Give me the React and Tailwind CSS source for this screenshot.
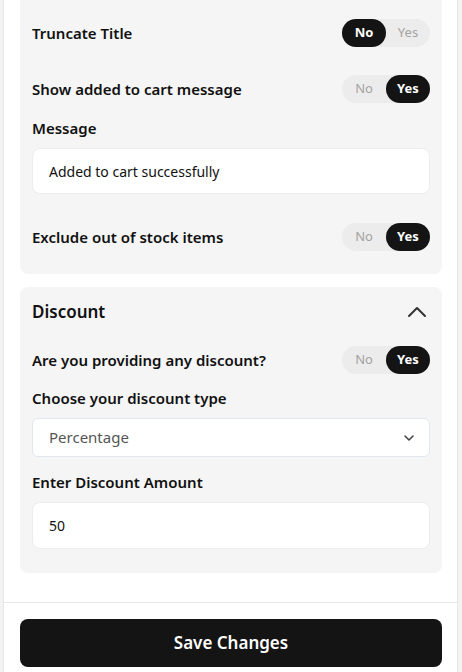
import React from "react";

function Toggle({ value }) {
  const yes = value === "yes";
  return (
    <div className="flex h-7 w-[88px] items-center rounded-full bg-[#ececec] text-[13px]">
      <div
        className={
          yes
            ? "flex h-7 w-[44px] items-center justify-center rounded-full text-[#a3a3a3]"
            : "flex h-7 w-[44px] items-center justify-center rounded-full bg-[#141414] font-bold text-white"
        }
      >
        No
      </div>
      <div
        className={
          yes
            ? "flex h-7 w-[44px] items-center justify-center rounded-full bg-[#141414] font-bold text-white"
            : "flex h-7 w-[44px] items-center justify-center rounded-full text-[#a3a3a3]"
        }
      >
        Yes
      </div>
    </div>
  );
}

function Row({ label, value, className = "" }) {
  return (
    <div className={"flex items-center justify-between " + className}>
      <span className="text-[15px] font-semibold text-[#111]">{label}</span>
      <Toggle value={value} />
    </div>
  );
}

export default function App() {
  return (
    <div
      className="min-h-[672px] bg-[#f3f3f3] pl-[3px] pr-[4px]"
      style={{ fontFamily: '"Noto Sans", "Open Sans", sans-serif' }}
    >
      <div className="flex min-h-[672px] flex-col border-x border-[#e6e6e6] bg-white">
        <div className="pl-4 pr-[15px]">
          <div className="rounded-b-lg bg-[#f5f5f5] px-3 pb-[23px] pt-[19px]">
            <Row label="Truncate Title" value="no" />
            <Row label="Show added to cart message" value="yes" className="mt-[28px]" />
            <div className="mt-[15px] h-5 text-[15px] font-semibold leading-5 text-[#111]">Message</div>
            <div className="mt-[10px] flex h-[46px] items-center rounded-lg border border-[#ededed] bg-white px-4 text-[14px] text-[#111]">
              Added to cart successfully
            </div>
            <Row label="Exclude out of stock items" value="yes" className="mt-[29px]" />
          </div>

          <div className="mt-[13px] rounded-lg bg-[#f5f5f5] px-3 pb-[24px] pt-[13px]">
            <div className="flex h-6 items-center justify-between">
              <span className="text-[17px] font-semibold text-[#111]">Discount</span>
              <svg width="20" height="12" viewBox="0 0 20 12" fill="none" className="mr-[3px]">
                <path d="M2 10 L10 2 L18 10" stroke="#333" strokeWidth="2" strokeLinecap="round" strokeLinejoin="round" />
              </svg>
            </div>
            <Row label="Are you providing any discount?" value="yes" className="mt-[22px]" />
            <div className="mt-[14px] h-5 text-[15px] font-semibold leading-5 text-[#111]">Choose your discount type</div>
            <div className="mt-[10px] flex h-[39px] items-center justify-between rounded-md border border-[#e2e7ef] bg-white pl-4 pr-[15px] text-[15px] text-[#555]">
              <span>Percentage</span>
              <svg width="10" height="6" viewBox="0 0 10 6" fill="none">
                <path d="M1 1 L5 5 L9 1" stroke="#444" strokeWidth="1.6" strokeLinecap="round" strokeLinejoin="round" />
              </svg>
            </div>
            <div className="mt-[15px] h-5 text-[15px] font-semibold leading-5 text-[#111]">Enter Discount Amount</div>
            <div className="mt-[10px] flex h-[47px] items-center rounded-lg border border-[#ededed] bg-white px-4 text-[14px] text-[#111]">
              50
            </div>
          </div>
        </div>

        <div className="mt-[29px] border-t border-[#e8e8e8] pl-4 pr-[15px] pt-4">
          <button className="flex h-[48px] w-full items-center justify-center rounded-lg bg-[#141414] text-[17px] font-semibold text-white">
            Save Changes
          </button>
        </div>
      </div>
    </div>
  );
}
